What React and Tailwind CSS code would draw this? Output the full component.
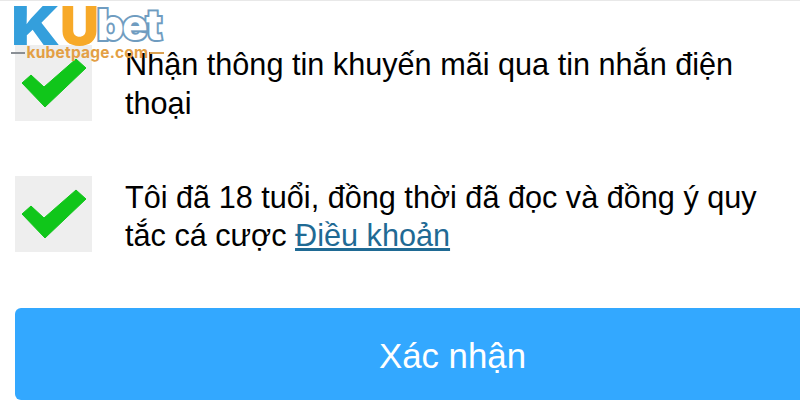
function Check() {
  return (
    <div className="flex h-[76px] w-[77px] shrink-0 items-center justify-center bg-[#eeeeee]">
      <svg width="77" height="76" viewBox="0 0 77 76">
        <polygon points="7,38 16,30 29,42 61,14 71,23 30,62" fill="#10c61a" strokeLinejoin="round" stroke="#10c61a" strokeWidth="1" />
      </svg>
    </div>
  );
}

function Logo() {
  return (
    <div className="absolute left-[11px] top-0 h-[62px] w-[155px] font-['Inter',sans-serif]">
      <span className="absolute left-0 top-0 origin-left scale-x-[1.2] text-[54px] font-black leading-[50px] text-[#349fdc]">K</span>
      <span className="absolute left-[49px] top-0 text-[54px] font-black leading-[50px] text-[#f7a928]">U</span>
      <span
        className="absolute left-[86px] top-[3px] text-[42px] font-extrabold leading-[42px] tracking-[-1.5px] text-white"
        style={{ WebkitTextStroke: "4px #6f9cc0", paintOrder: "stroke fill" }}
      >
        bet
      </span>
      <div className="absolute left-0 top-[43px] flex w-[153px] items-center justify-between">
        <span className="h-[2px] w-[14px] bg-[#8a8f95]" />
        <span className="text-[15.5px] font-bold leading-[18px] tracking-[0.2px] text-[#e39f45]">kubetpage.com</span>
        <span className="h-[2px] w-[14px] bg-[#d9a050]" />
      </div>
    </div>
  );
}

export default function App() {
  return (
    <div className="relative h-[400px] w-[800px] overflow-hidden border-t border-[#e8e8e8] bg-white font-['Liberation_Sans',Arial,sans-serif] text-black">
      <Logo />
      <div className="flex flex-col pl-[15px] pt-[44px]">
        <div className="flex h-[76px] gap-[33px]">
          <Check />
          <p className="w-[650px] text-[30.65px] leading-[39px]">Nhận thông tin khuyến mãi qua tin nhắn điện thoại</p>
        </div>
        <div className="mt-[55px] flex h-[76px] gap-[33px]">
          <Check />
          <p className="w-[650px] pt-[2px] text-[30.65px] leading-[38px]">
            Tôi đã 18 tuổi, đồng thời đã đọc và đồng ý quy tắc cá cược{" "}
            <a href="#" className="text-[#1f6a94] underline">Điều khoản</a>
          </p>
        </div>
        <button className="mt-[56px] flex h-[92px] w-[875px] shrink-0 items-start justify-center rounded-[6px] bg-[#33a8ff] pt-[28px] text-[34.8px] leading-[40px] text-white">
          Xác nhận
        </button>
      </div>
    </div>
  );
}
